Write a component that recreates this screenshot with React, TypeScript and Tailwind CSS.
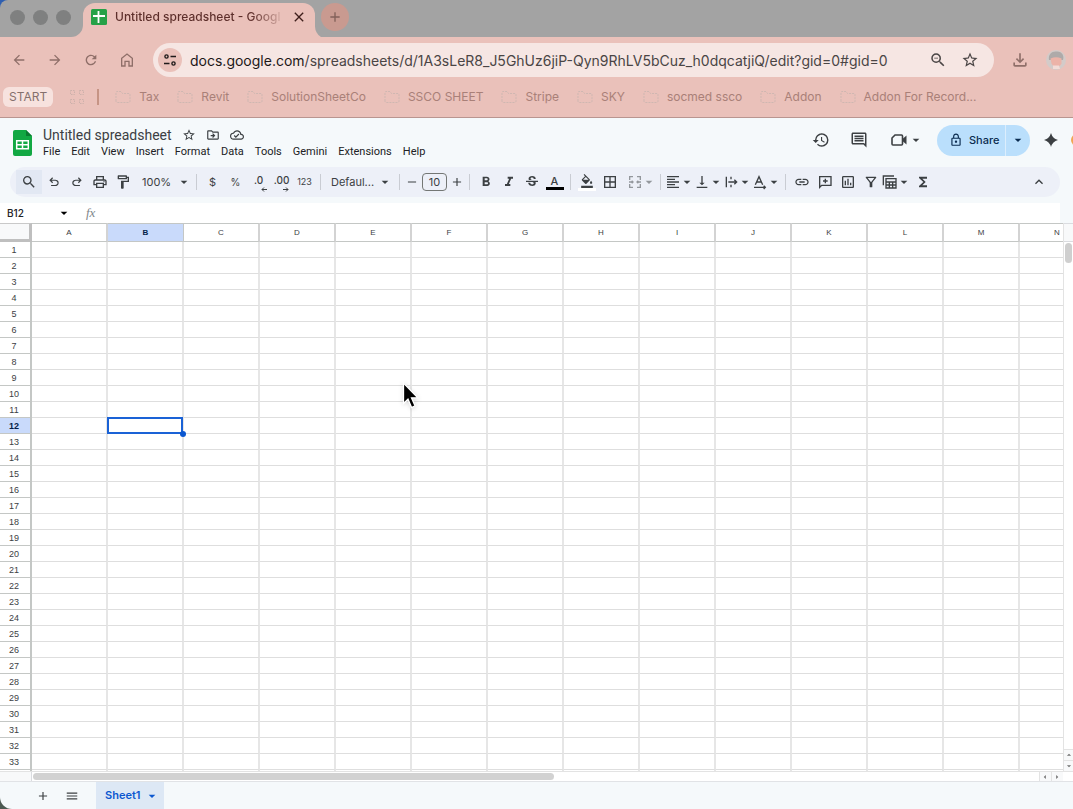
import type { ReactNode } from "react";
import type { IconType } from "react-icons";
import {
  MdAdd,
  MdArrowBack,
  MdArrowDropDown,
  MdArrowDropUp,
  MdArrowForward,
  MdArrowLeft,
  MdArrowRight,
  MdBorderAll,
  MdClose,
  MdFormatAlignLeft,
  MdFormatBold,
  MdFormatColorFill,
  MdFormatItalic,
  MdFunctions,
  MdHistory,
  MdInsertLink,
  MdKeyboardArrowUp,
  MdMenu,
  MdOutlineCloudDone,
  MdOutlineComment,
  MdOutlineDriveFileMove,
  MdOutlineFileDownload,
  MdOutlineFilterAlt,
  MdOutlineFormatPaint,
  MdOutlineInsertChart,
  MdOutlineLock,
  MdOutlinePrint,
  MdRefresh,
  MdRemove,
  MdSearch,
  MdStarBorder,
  MdStrikethroughS,
  MdVerticalAlignBottom,
  MdZoomOut,
} from "react-icons/md";

const bookmarks = [
  "Tax",
  "Revit",
  "SolutionSheetCo",
  "SSCO SHEET",
  "Stripe",
  "SKY",
  "socmed ssco",
  "Addon",
  "Addon For Record...",
];

const menus = ["File", "Edit", "View", "Insert", "Format", "Data", "Tools", "Gemini", "Extensions", "Help"];

const columns = "ABCDEFGHIJKLMN".split("");
const rows = Array.from({ length: 33 }, (_, i) => i + 1);
const active = { col: "B", row: 12 };

function Svg({ size, box = "0 0 24 24", children }: { size: number; box?: string; children: ReactNode }) {
  return (
    <svg width={size} height={size} viewBox={box} fill="none" stroke="currentColor" strokeWidth="2" aria-hidden="true">
      {children}
    </svg>
  );
}

function Caret() {
  return <MdArrowDropDown className="pointer-events-none size-4 shrink-0" aria-hidden="true" />;
}

function Divider() {
  return <span className="mx-1 h-4 w-px shrink-0 bg-[#c9ccd3]" />;
}

function Tool({ label, icon: Icon, children }: { label: string; icon?: IconType; children?: ReactNode }) {
  return (
    <button aria-label={label} className="flex h-6 w-[23px] shrink-0 items-center justify-center text-[#3c4043]">
      {Icon ? <Icon className="size-4" /> : children}
    </button>
  );
}

function MenuTool({ label, icon: Icon, children }: { label: string; icon?: IconType; children?: ReactNode }) {
  return (
    <button aria-label={label} className="flex h-6 w-[29px] shrink-0 items-center text-[#3c4043]">
      <span className="-mr-0.5 flex w-4 shrink-0 justify-center">{Icon ? <Icon className="size-4" /> : children}</span>
      <Caret />
    </button>
  );
}

function TabStrip() {
  return (
    <div className="bg-[#2f5fb0]">
      <div className="flex h-[37px] items-end rounded-tl-lg bg-[#a3a3a3]">
        <div className="flex h-full items-center gap-2 pb-0.5 pl-2.5">
          {["Close window", "Minimize window", "Maximize window"].map((name) => (
            <button key={name} aria-label={name} className="size-[15px] rounded-full bg-[#7f8080]" />
          ))}
        </div>
        <svg width="12" height="12" viewBox="0 0 12 12" className="shrink-0 text-[#eac1ba]" aria-hidden="true">
          <path d="M12 0v12H0A12 12 0 0 0 12 0z" fill="currentColor" />
        </svg>
        <div className="flex h-[34px] w-[232px] shrink-0 items-center rounded-t-xl bg-[#eac1ba] pb-1.5 pl-2 pr-2">
          <svg width="16" height="16" viewBox="0 0 16 16" className="shrink-0" aria-hidden="true">
            <rect width="16" height="16" rx="1.5" fill="#26a147" />
            <path d="M7.5 2v12M2 7h12" stroke="#fff" strokeWidth="1.8" />
          </svg>
          <span className="ml-2 w-[170px] overflow-hidden whitespace-nowrap bg-linear-to-r from-[#5d2f2b] from-80% to-[#eac1ba] bg-clip-text text-[12px] font-medium text-transparent">
            Untitled spreadsheet - Googl
          </span>
          <button aria-label="Close tab" className="ml-auto text-[#3f1f1c]">
            <MdClose className="size-4" />
          </button>
        </div>
        <svg width="6" height="12" viewBox="0 0 6 12" className="shrink-0 text-[#eac1ba]" aria-hidden="true">
          <path d="M0 0v12h6A9 12 0 0 1 0 0z" fill="currentColor" />
        </svg>
        <button
          aria-label="New tab"
          className="mb-1.5 flex size-7 items-center justify-center rounded-full bg-[#c99a90] text-[#826059]"
        >
          <MdAdd className="size-4" />
        </button>
      </div>
    </div>
  );
}

function AddressBar() {
  return (
    <div className="flex h-[46px] items-center text-[#8f6f69]">
      <div className="flex items-center gap-5 pl-[11px]">
        <button aria-label="Back">
          <MdArrowBack className="size-4" />
        </button>
        <button aria-label="Forward">
          <MdArrowForward className="size-4" />
        </button>
        <button aria-label="Reload">
          <MdRefresh className="size-4" />
        </button>
        <button aria-label="Home">
          <Svg size={16}>
            <path d="M4 21V9.500l8-6.500 8 6.500V21h-5v-7H9v7z" />
          </Svg>
        </button>
      </div>
      <div className="ml-[18px] flex h-[34px] min-w-0 flex-1 items-center rounded-full bg-[#f6e6e3] pl-[5px] pr-[15px] text-[#4a4545]">
        <button
          aria-label="View site information"
          className="flex size-6 shrink-0 items-center justify-center rounded-full bg-[#eac1ba] text-[#1f1a1a]"
        >
          <svg width="14" height="14" viewBox="0 0 14 14" fill="none" stroke="currentColor" strokeWidth="1.4" aria-hidden="true">
            <circle cx="3.500" cy="3.500" r="1.600" />
            <path d="M7.500 3.500H13M1 10.500h5.500" />
            <circle cx="10.500" cy="10.500" r="1.600" />
          </svg>
        </button>
        <span className="ml-2 min-w-0 flex-1 truncate text-[14px]">
          <span className="text-[#1d1818]">docs.google.com</span>
          /spreadsheets/d/1A3sLeR8_J5GhUz6jiP-Qyn9RhLV5bCuz_h0dqcatjiQ/edit?gid=0#gid=0
        </span>
        <button aria-label="Zoom" className="shrink-0">
          <MdZoomOut className="size-[18px]" />
        </button>
        <button aria-label="Bookmark this tab" className="ml-3.5 shrink-0">
          <MdStarBorder className="size-[18px]" />
        </button>
      </div>
      <button aria-label="Downloads" className="ml-4 shrink-0">
        <MdOutlineFileDownload className="size-5" />
      </button>
      <button aria-label="Profile" className="ml-4 mr-[7px] shrink-0">
        <svg width="20" height="20" viewBox="0 0 20 20" aria-hidden="true">
          <circle cx="10" cy="10" r="10" fill="#d3cbc9" />
          <path d="M3 10C2 4 6 1 10.500 1.500 16 1 18.500 6 17 10z" fill="#aeaaa9" />
          <path d="M4.500 8.500q5.500-2.500 11 0v5c-2 4.500-8 4.500-10 0z" fill="#ecb3a8" />
          <path d="M7 15.500h6l1 3.500H7z" fill="#f2dcd7" />
        </svg>
      </button>
    </div>
  );
}

function BookmarkBar() {
  return (
    <nav className="flex h-[35px] items-center border-b border-[#b99590] pb-[7px] pl-[3px] text-[12px] text-[#a98078]">
      <a href="#start" className="rounded-md bg-[#f7e2de] px-1.5 leading-5 text-[#85706c]">
        START
      </a>
      <svg width="16" height="16" viewBox="0 0 16 16" fill="none" className="ml-4 shrink-0 text-[#cdb0ab]" aria-hidden="true">
        <path
          d="M1.500 1.500h4v4h-4zM10.500 1.500h4v4h-4zM1.500 10.500h4v4h-4zM10.500 10.500h4v4h-4z"
          stroke="currentColor"
          strokeDasharray="1.500 1"
        />
      </svg>
      <span className="ml-3 h-4 w-0.5 shrink-0 bg-[#c69485]" />
      <div className="ml-4 flex gap-[18px]">
        {bookmarks.map((name) => (
          <a key={name} href="#bookmark" className="flex shrink-0 items-center gap-2 whitespace-nowrap">
            <svg width="16" height="14" viewBox="0 0 16 14" fill="none" aria-hidden="true">
              <path
                d="M1 11V2.500Q1 1.500 2 1.500h4l1.500 2H14q1 0 1 1V11q0 1.500-1.500 1.500h-11Q1 12.500 1 11z"
                stroke="#cfb7b1"
                strokeDasharray="2 1"
              />
            </svg>
            {name}
          </a>
        ))}
      </div>
    </nav>
  );
}

function DocHeader() {
  return (
    <header className="flex h-[49px] items-start overflow-hidden pl-[13px]">
      <svg width="19" height="26" viewBox="0 0 19 26" className="mt-3 shrink-0" aria-hidden="true">
        <path d="M2 0h11l6 6v18q0 2-2 2H2q-2 0-2-2V2Q0 0 2 0z" fill="#12a843" />
        <path d="M13 0l6 6h-6z" fill="#0b7a31" />
        <path d="M3.700 10.700h11.600v8.100H3.700zM9.500 10.500v8.500M3.500 14.800h12" fill="none" stroke="#fff" strokeWidth="1.500" />
      </svg>
      <div className="ml-[11px] mt-2 shrink-0 font-['Roboto',sans-serif]">
        <div className="flex items-center text-[#3c4043]">
          <h1 className="text-[14px] leading-[18px]">Untitled spreadsheet</h1>
          <button aria-label="Star" className="ml-2.5">
            <MdStarBorder className="size-3.5" />
          </button>
          <button aria-label="Move" className="ml-2.5">
            <MdOutlineDriveFileMove className="size-3.5" />
          </button>
          <button aria-label="Document status" className="ml-2.5">
            <MdOutlineCloudDone className="size-3.5" />
          </button>
        </div>
        <nav className="flex gap-[11px] text-[11px] leading-4 text-[#202124]">
          {menus.map((name) => (
            <button key={name}>{name}</button>
          ))}
        </nav>
      </div>
      <div className="ml-auto mt-1.5 flex h-8 shrink-0 items-center text-[#3c4043]">
        <button aria-label="Version history">
          <MdHistory className="size-[18px]" />
        </button>
        <button aria-label="Comments" className="ml-5">
          <MdOutlineComment className="size-[18px]" />
        </button>
        <button aria-label="Join a call" className="ml-[22px] flex items-center">
          <svg width="18" height="18" viewBox="0 0 18 18" aria-hidden="true">
            <path d="M5 4h6.500q1 0 1 1v8q0 1-1 1H3q-1 0-1-1V7z" fill="none" stroke="currentColor" strokeWidth="1.600" />
            <path d="M13 7.500l3.500-3v9l-3.500-3z" fill="currentColor" />
          </svg>
          <Caret />
        </button>
        <div className="ml-[13px] flex h-[31px] items-center rounded-full bg-[#badffc] text-[#0b2c50]">
          <button className="flex h-full w-[68px] items-center gap-1.5 pl-3 text-[11px] font-medium">
            <MdOutlineLock className="size-3.5 shrink-0" />
            Share
          </button>
          <button
            aria-label="Quick sharing actions"
            className="flex h-full w-[25px] items-center justify-center border-l border-[#dceefd]"
          >
            <Caret />
          </button>
        </div>
        <button aria-label="Ask Gemini" className="ml-3.5">
          <svg width="14" height="14" viewBox="0 0 14 14" aria-hidden="true">
            <path d="M7 0q1.500 5.500 7 7-5.500 1.500-7 7-1.500-5.500-7-7 5.500-1.500 7-7z" fill="currentColor" />
          </svg>
        </button>
        <button aria-label="Account" className="ml-[13px] flex h-6 w-0.5 overflow-hidden">
          <span className="my-1.5 h-3 w-6 shrink-0 rounded-full bg-[#f1a552]" />
        </button>
      </div>
    </header>
  );
}

function Toolbar() {
  return (
    <div
      role="toolbar"
      aria-label="Formatting"
      className="ml-2.5 mr-[13px] flex h-[30px] items-center overflow-hidden rounded-full bg-[#edf0f8] pl-1.5 pr-2.5 text-[11px] text-[#3c4043]"
    >
      <button aria-label="Search the menus" className="flex h-6 w-[26px] shrink-0 items-center justify-center bg-[#e2e8f3]">
        <MdSearch className="size-4" />
      </button>
      <Tool label="Undo">
        <svg width="14" height="14" viewBox="0 -960 960 960" fill="currentColor" aria-hidden="true">
          <path d="M280-200v-80h284q63 0 109.500-40T720-420q0-60-46.500-100T564-560H312l104 104-56 56-200-200 200-200 56 56-104 104h252q97 0 169.500 63T800-420q0 94-72.500 157T564-200H280Z" />
        </svg>
      </Tool>
      <Tool label="Redo">
        <svg width="14" height="14" viewBox="0 -960 960 960" fill="currentColor" aria-hidden="true">
          <path d="M396-200q-97 0-169.500-63T154-420q0-94 72.500-157T396-640h252L544-744l56-56 200 200-200 200-56-56 104-104H396q-63 0-109.500 40T240-420q0 60 46.500 100T396-280h284v80H396Z" />
        </svg>
      </Tool>
      <Tool label="Print" icon={MdOutlinePrint} />
      <Tool label="Paint format" icon={MdOutlineFormatPaint} />
      <label className="flex shrink-0 items-center pl-2">
        <select aria-label="Zoom" className="w-[34px] appearance-none">
          <option>100%</option>
        </select>
        <Caret />
      </label>
      <Divider />
      <Tool label="Format as currency">$</Tool>
      <Tool label="Format as percent">
        <span className="text-[10px]">%</span>
      </Tool>
      <Tool label="Decrease decimal places">
        <span className="relative pb-1 text-[10px] font-medium">
          .0
          <svg width="6" height="5" viewBox="0 0 6 5" className="absolute -right-1 bottom-0" aria-hidden="true">
            <path d="M6 2.500H1M3 .5l-2 2 2 2" fill="none" stroke="currentColor" />
          </svg>
        </span>
      </Tool>
      <Tool label="Increase decimal places">
        <span className="relative pb-1 text-[10px] font-medium">
          .00
          <svg width="6" height="5" viewBox="0 0 6 5" className="absolute right-0 bottom-0" aria-hidden="true">
            <path d="M0 2.500h5M3 .5l2 2-2 2" fill="none" stroke="currentColor" />
          </svg>
        </span>
      </Tool>
      <Tool label="More formats">
        <span className="text-[9px]">123</span>
      </Tool>
      <Divider />
      <label className="flex shrink-0 items-center pl-1.5 pr-0.5">
        <select aria-label="Font" className="w-[46px] appearance-none">
          <option>Defaul...</option>
        </select>
        <Caret />
      </label>
      <Divider />
      <button aria-label="Decrease font size" className="flex h-6 w-4 shrink-0 items-center justify-center">
        <MdRemove className="size-3.5" />
      </button>
      <input
        aria-label="Font size"
        defaultValue="10"
        className="mx-0.5 h-[18px] w-[25px] shrink-0 rounded-sm border border-[#747775] text-center text-[11px]"
      />
      <button aria-label="Increase font size" className="flex h-6 w-4 shrink-0 items-center justify-center">
        <MdAdd className="size-3.5" />
      </button>
      <Divider />
      <Tool label="Bold" icon={MdFormatBold} />
      <Tool label="Italic" icon={MdFormatItalic} />
      <Tool label="Strikethrough" icon={MdStrikethroughS} />
      <Tool label="Text color">
        <span className="w-[18px] border-b-[3px] border-black text-[11px] font-medium leading-[12px]">A</span>
      </Tool>
      <Divider />
      <Tool label="Fill color">
        <span className="flex w-[18px] justify-center border-b-[3px] border-white">
          <MdFormatColorFill className="size-3.5" />
        </span>
      </Tool>
      <Tool label="Borders" icon={MdBorderAll} />
      <span className="flex shrink-0 pl-1.5 opacity-50">
        <MenuTool label="Merge cells">
          <Svg size={16}>
            <path d="M9 4H4v5M15 4h5v5M9 20H4v-5M15 20h5v-5M3 12h6M15 12h6M7 10l2 2-2 2M17 10l-2 2 2 2" />
          </Svg>
        </MenuTool>
      </span>
      <Divider />
      <MenuTool label="Horizontal align" icon={MdFormatAlignLeft} />
      <MenuTool label="Vertical align" icon={MdVerticalAlignBottom} />
      <MenuTool label="Text wrapping">
        <Svg size={16}>
          <path d="M5 4v16M12 4v4M12 16v4M8 12h12M17 8.500l3.500 3.500-3.500 3.500" />
        </Svg>
      </MenuTool>
      <MenuTool label="Text rotation">
        <Svg size={16}>
          <path d="M5 16l5.500-12 5.500 12M7 12h7M3 20h17M17.500 17.500L20 20l-2.500 2.500" />
        </Svg>
      </MenuTool>
      <Divider />
      <Tool label="Insert link" icon={MdInsertLink} />
      <Tool label="Insert comment">
        <Svg size={16}>
          <path d="M4 20V4h17v13H7zM12.500 7v7M9 10.500h7" />
        </Svg>
      </Tool>
      <Tool label="Insert chart" icon={MdOutlineInsertChart} />
      <Tool label="Create a filter" icon={MdOutlineFilterAlt} />
      <MenuTool label="Table views">
        <Svg size={16}>
          <path d="M2 17V3h16M6 7h15v14H6zM6 12h15M11 12v9M16 12v9M6 16.500h15" />
        </Svg>
      </MenuTool>
      <Tool label="Functions" icon={MdFunctions} />
      <span className="flex-1" />
      <Tool label="Hide the menus" icon={MdKeyboardArrowUp} />
    </div>
  );
}

function FormulaBar() {
  return (
    <div className="mr-[13px] mt-1.5 flex h-5 items-center bg-white">
      <input aria-label="Name box" defaultValue="B12" className="w-14 pl-[7px] text-[10px] font-medium text-[#202124]" />
      <button aria-label="Named ranges">
        <Caret />
      </button>
      <label htmlFor="formula" className="ml-3.5 font-['Liberation_Serif',serif] text-[13px] italic text-[#80868b]">
        fx
      </label>
      <input id="formula" className="min-w-0 flex-1 px-2 text-[11px] outline-none" />
    </div>
  );
}

function Grid() {
  return (
    <div className="min-w-0 flex-1 overflow-hidden bg-white">
      <table className="w-max table-fixed border-separate border-spacing-0 font-['Liberation_Sans',sans-serif] text-[9px] leading-3 text-[#3c4043]">
        <thead>
          <tr className="h-[19px]">
            <th
              aria-label="Select all"
              className="w-8 min-w-8 border-b-3 border-r-3 border-t border-[#bfbfbf] border-t-[#c9c9c9] bg-[#f8f9fa] p-0"
            />
            {columns.map((col) => (
              <th
                key={col}
                scope="col"
                className={
                  col === active.col
                    ? "w-[76px] min-w-[76px] border-b border-r border-t border-[#c4c7c5] bg-[#c9dafb] p-0 text-[8px] font-bold text-[#041e49]"
                    : "w-[76px] min-w-[76px] border-b border-r-2 border-t border-[#c4c7c5] border-r-[#d3d3d3] bg-white p-0 text-[8px] font-normal"
                }
              >
                {col}
              </th>
            ))}
          </tr>
        </thead>
        <tbody>
          {rows.map((row) => (
            <tr key={row} className="h-4">
              <th
                scope="row"
                className={
                  row === active.row
                    ? "border-b border-r-2 border-[#c4c7c5] bg-[#c9dafb] p-0 pr-0.5 font-bold text-[#041e49]"
                    : "border-b border-r-2 border-[#c4c7c5] bg-white p-0 pr-0.5 font-normal"
                }
              >
                {row}
              </th>
              {columns.map((col) =>
                col === active.col && row === active.row ? (
                  <td key={col} className="relative border-b border-r-2 border-[#dedede] border-r-[#e6e6e6] p-0">
                    <span className="absolute -inset-px border-2 border-[#1a62d6]" />
                    <span className="absolute -bottom-1 -right-1 size-1.5 rounded-full bg-[#0b57d0]" />
                  </td>
                ) : (
                  <td key={col} className="border-b border-r-2 border-[#dedede] border-r-[#e6e6e6] p-0" />
                ),
              )}
            </tr>
          ))}
          <tr className="h-4" aria-hidden="true">
            <td className="border-r-2 border-[#c4c7c5] p-0" />
            {columns.map((col) => (
              <td key={col} className="border-r-2 border-[#e6e6e6] p-0" />
            ))}
          </tr>
        </tbody>
      </table>
    </div>
  );
}

function SheetTabs() {
  return (
    <footer className="bg-[#4c5a52]">
      <div className="flex h-7 items-center rounded-bl-xl border-t border-[#e1e3e6] bg-[#f5f9fb] pl-9 text-[#3c4043]">
        <button aria-label="Add sheet">
          <MdAdd className="size-3.5" />
        </button>
        <button aria-label="All sheets" className="ml-[15px]">
          <MdMenu className="size-3.5" />
        </button>
        <button className="ml-[17px] flex h-full items-center gap-1 bg-[#dde8f5] pl-[9px] pr-1 text-[11px] font-semibold text-[#0b57d0]">
          Sheet1
          <Caret />
        </button>
      </div>
    </footer>
  );
}

export default function App() {
  return (
    <div className="relative flex h-screen flex-col overflow-hidden bg-[#f5f9fb] font-['Inter',sans-serif]">
      <TabStrip />
      <div className="bg-[#eac1ba]">
        <AddressBar />
        <BookmarkBar />
      </div>
      <DocHeader />
      <Toolbar />
      <FormulaBar />
      <main className="flex min-h-0 flex-1">
        <Grid />
        <div className="flex w-2.5 shrink-0 flex-col items-center border-l border-[#e3e3e3] bg-white text-[#6f6f6f]">
          <div className="h-[19px] w-full shrink-0 border-b border-t border-[#dadce0] bg-[#f8f9fa]" />
          <span className="mt-px h-5 w-[7px] rounded-full bg-[#cfcfcf]" />
          <button aria-label="Scroll up" className="mt-auto border-t border-[#e3e3e3] bg-[#f8f9fa]">
            <MdArrowDropUp className="size-2.5" />
          </button>
          <button aria-label="Scroll down" className="border-t border-[#e3e3e3] bg-[#f8f9fa]">
            <MdArrowDropDown className="size-2.5" />
          </button>
        </div>
      </main>
      <div className="flex h-2.5 shrink-0 items-center border-t border-[#e3e3e3] bg-white pr-2.5 text-[#6f6f6f]">
        <span className="h-full w-8 shrink-0 border-r border-[#dadce0] bg-[#f8f9fa]" />
        <span className="ml-px h-[7px] w-[49%] rounded-full bg-[#d2d2d2]" />
        <button aria-label="Scroll left" className="ml-auto w-3 border-l border-[#e3e3e3] bg-[#f8f9fa]">
          <MdArrowLeft className="size-2.5" />
        </button>
        <button aria-label="Scroll right" className="w-3 border-l border-[#e3e3e3] bg-[#f8f9fa]">
          <MdArrowRight className="size-2.5" />
        </button>
      </div>
      <SheetTabs />
      <svg
        width="20"
        height="30"
        viewBox="0 0 20 30"
        className="pointer-events-none absolute left-[401px] top-[381px] drop-shadow-sm"
        aria-hidden="true"
      >
        <path
          d="M2.500 2v20.500l4.500-4.300 3.600 8.300 3.400-1.700-3.500-8h6.300z"
          fill="#000"
          stroke="#fff"
          strokeWidth="1.300"
        />
      </svg>
    </div>
  );
}
